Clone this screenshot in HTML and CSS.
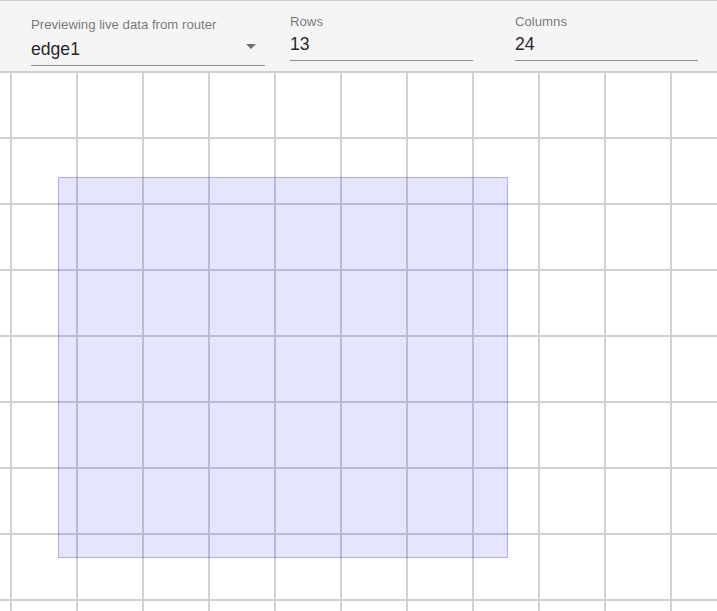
FILE: index.html
```html
<!DOCTYPE html>
<html>
<head>
<meta charset="utf-8">
<link rel="stylesheet" href="styles.css">
</head>
<body>
<div class="toolbar">
  <div class="field field-select">
    <div class="label">Previewing live data from router</div>
    <div class="input">edge1
      <svg class="arrow" width="24" height="24" viewBox="0 0 24 24"><path d="M7 10l5 5 5-5z"/></svg>
    </div>
  </div>
  <div class="field field-text field-rows">
    <div class="label">Rows</div>
    <div class="input">13</div>
  </div>
  <div class="field field-text field-cols">
    <div class="label">Columns</div>
    <div class="input">24</div>
  </div>
</div>
<div class="grid">
  <div class="selection"></div>
</div>
</body>
</html>
```

FILE: styles.css
```css
html, body {
  margin: 0;
  padding: 0;
  background: #fff;
  font-family: "Liberation Sans", Arial, Helvetica, sans-serif;
}
body {
  width: 717px;
  height: 611px;
  overflow: hidden;
}
.toolbar {
  display: flex;
  align-items: flex-start;
  height: 70px;
  background: #f5f5f5;
  border-top: 1px solid #cfcfcf;
  border-bottom: 1px solid #d0d0d0;
  padding-left: 31px;
}
.field {
  padding-top: 16px;
}
.field-select { width: 234px; }
.field-text { padding-top: 13px; }
.field-rows { width: 183px; margin-left: 25px; }
.field-cols { width: 183px; margin-left: 42px; }
.label {
  font-size: 13.2px;
  line-height: 16px;
  color: rgba(0, 0, 0, 0.54);
  white-space: nowrap;
}
.input {
  position: relative;
  margin-top: 6px;
  font-size: 17.6px;
  line-height: 20px;
  height: 20px;
  padding-bottom: 6px;
  color: rgba(0, 0, 0, 0.87);
  border-bottom: 1px solid rgba(0, 0, 0, 0.42);
}
.field-text .input {
  margin-top: 4px;
}
.arrow {
  position: absolute;
  right: 2px;
  top: -5px;
  fill: rgba(0, 0, 0, 0.54);
}
.grid {
  position: relative;
  height: 539px;
  background-image:
    linear-gradient(to right, #d0d0d0 2px, transparent 2px),
    linear-gradient(to bottom, #d0d0d0 2px, transparent 2px);
  background-size: 66px 66px;
  background-position: 10px 65px;
}
.selection {
  position: absolute;
  left: 58px;
  top: 105px;
  width: 450px;
  height: 381px;
  box-sizing: border-box;
  background: rgba(0, 0, 255, 0.1);
  border: 1px solid rgba(0, 0, 255, 0.25);
}
```
